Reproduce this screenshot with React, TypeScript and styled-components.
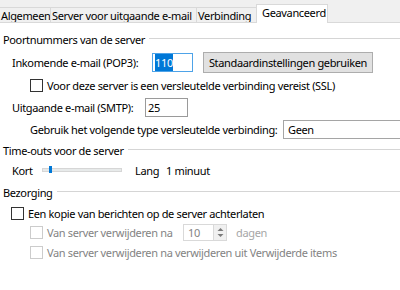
import React from 'react';
import styled, { createGlobalStyle } from 'styled-components';

const GlobalStyle = createGlobalStyle`
    html, body {
        margin: 0;
        padding: 0;
        background: #ffffff;
    }
    body {
        width: 400px;
        height: 290px;
        overflow: hidden;
        font-family: 'Noto Sans', 'Open Sans', sans-serif;
        font-size: 11px;
        letter-spacing: -0.35px;
        color: #000000;
    }
`;

const tabs = [
    { label: 'Algemeen', width: 51 },
    { label: 'Server voor uitgaande e-mail', width: 146 },
    { label: 'Verbinding', width: 60 },
    { label: 'Geavanceerd', width: 72, active: true },
];

const App = () => {
    return (
        <>
            <GlobalStyle />
            <Window>
                <TabBar>
                    {tabs.map((tab, index) => (
                        <Tab key={index} $width={tab.width} $active={!!tab.active}>
                            {tab.label}
                        </Tab>
                    ))}
                    <TabFill />
                </TabBar>
                <Content>
                    <GroupHeader $mt={8}>Poortnummers van de server</GroupHeader>
                    <Row $mt={4} $h={22} $indent={12}>
                        <Label $w={140}>Inkomende e-mail (POP3):</Label>
                        <TextBox $width={41} $focused>
                            <Selected>110</Selected>
                        </TextBox>
                        <Button>Standaardinstellingen gebruiken</Button>
                    </Row>
                    <Row $mt={4} $h={16} $indent={30}>
                        <CheckBox />
                        <Label>Voor deze server is een versleutelde verbinding vereist (SSL)</Label>
                    </Row>
                    <Row $mt={4} $h={20} $indent={12}>
                        <Label $w={133}>Uitgaande e-mail (SMTP):</Label>
                        <TextBox $width={43}>25</TextBox>
                    </Row>
                    <Row $mt={2} $h={20} $indent={30}>
                        <Label $w={253}>Gebruik het volgende type versleutelde verbinding:</Label>
                        <SelectBox>Geen</SelectBox>
                    </Row>
                    <GroupHeader $mt={3}>Time-outs voor de server</GroupHeader>
                    <Row $mt={4} $h={16} $indent={12}>
                        <Label $w={30}>Kort</Label>
                        <Track>
                            <Thumb style={{ left: 6 }} />
                        </Track>
                        <Label $w={31}>Lang</Label>
                        <Label>1 minuut</Label>
                    </Row>
                    <GroupHeader $mt={6}>Bezorging</GroupHeader>
                    <Row $mt={5} $h={16} $indent={11}>
                        <CheckBox />
                        <Label>Een kopie van berichten op de server achterlaten</Label>
                    </Row>
                    <Row $mt={1} $h={20} $indent={30} $disabled>
                        <CheckBox $disabled />
                        <Label $w={136}>Van server verwijderen na</Label>
                        <SpinBox>
                            <SpinValue>10</SpinValue>
                            <SpinButtons>
                                <svg width="7" height="11" viewBox="0 0 7 11">
                                    <path d="M3.5 1 L6.5 4 L0.5 4 Z" fill="#7a7a7a" />
                                    <path d="M3.5 10 L6.5 7 L0.5 7 Z" fill="#7a7a7a" />
                                </svg>
                            </SpinButtons>
                        </SpinBox>
                        <Days>dagen</Days>
                    </Row>
                    <Row $mt={2} $h={16} $indent={30} $disabled>
                        <CheckBox $disabled />
                        <Label>Van server verwijderen na verwijderen uit Verwijderde items</Label>
                    </Row>
                </Content>
            </Window>
        </>
    );
};

export default App;

const Window = styled.div`
    width: 400px;
    height: 290px;
    display: flex;
    flex-direction: column;
    background: #ffffff;
`;

const TabBar = styled.div`
    display: flex;
    align-items: flex-end;
    height: 23px;
    background: #f0f0f0;
`;

const Tab = styled.div<{ $width: number; $active: boolean }>`
    box-sizing: border-box;
    flex: none;
    width: ${(p) => p.$width}px;
    height: ${(p) => (p.$active ? 19 : 16)}px;
    padding-left: ${(p) => (p.$active ? 5 : 1)}px;
    padding-bottom: ${(p) => (p.$active ? 3 : 0)}px;
    display: flex;
    align-items: center;
    white-space: nowrap;
    overflow: hidden;
    background: ${(p) => (p.$active ? '#ffffff' : '#f0f0f0')};
    border: 1px solid #d9d9d9;
    border-left: ${(p) => (p.$active ? '1px solid #d9d9d9' : 'none')};
    border-bottom: ${(p) => (p.$active ? 'none' : '1px solid #d9d9d9')};
    margin-left: ${(p) => (p.$active ? -1 : 0)}px;
`;

const TabFill = styled.div`
    flex: 1;
    height: 1px;
    background: #d9d9d9;
`;

const Content = styled.div`
    display: flex;
    flex-direction: column;
`;

const GroupHeader = styled.div<{ $mt: number }>`
    display: flex;
    align-items: center;
    height: 16px;
    margin-top: ${(p) => p.$mt}px;
    padding-left: 3px;
    white-space: nowrap;
    &::after {
        content: '';
        flex: 1;
        height: 1px;
        margin-left: 4px;
        margin-top: -2px;
        background: #d5d5d5;
    }
`;

const Row = styled.div<{ $mt: number; $h: number; $indent: number; $disabled?: boolean }>`
    display: flex;
    align-items: center;
    height: ${(p) => p.$h}px;
    margin-top: ${(p) => p.$mt}px;
    padding-left: ${(p) => p.$indent}px;
    white-space: nowrap;
    color: ${(p) => (p.$disabled ? '#838383' : '#000000')};
`;

const Label = styled.span<{ $w?: number }>`
    flex: none;
    ${(p) => (p.$w ? `width: ${p.$w}px;` : '')}
`;

const TextBox = styled.div<{ $width: number; $focused?: boolean }>`
    box-sizing: border-box;
    width: ${(p) => p.$width}px;
    height: 19px;
    padding-left: 2px;
    display: flex;
    align-items: center;
    background: #ffffff;
    border: 1px solid ${(p) => (p.$focused ? '#4ea3e8' : '#9a9a9a')};
`;

const Selected = styled.span`
    background: #0078d7;
    color: #ffffff;
    padding: 1px 0;
    line-height: 15px;
`;

const Button = styled.div`
    box-sizing: border-box;
    width: 170px;
    height: 21px;
    margin-left: 10px;
    display: flex;
    align-items: center;
    justify-content: center;
    background: #e1e1e1;
    border: 1px solid #adadad;
`;

const CheckBox = styled.div<{ $disabled?: boolean }>`
    box-sizing: border-box;
    flex: none;
    width: 13px;
    height: 13px;
    margin-right: 4px;
    background: #ffffff;
    border: 1px solid ${(p) => (p.$disabled ? '#cccccc' : '#333333')};
`;

const SelectBox = styled.div`
    box-sizing: border-box;
    flex: 1;
    height: 19px;
    padding-left: 4px;
    display: flex;
    align-items: center;
    background: #ffffff;
    border: 1px solid #a5a5a5;
    border-right: none;
`;

const Track = styled.div`
    position: relative;
    box-sizing: border-box;
    flex: none;
    width: 80px;
    height: 4px;
    margin-right: 13px;
    background: #e7eaea;
    border: 1px solid #d6d6d6;
`;

const Thumb = styled.div`
    position: absolute;
    top: -3px;
    width: 3px;
    height: 7px;
    background: #0078d7;
`;

const SpinBox = styled.div`
    box-sizing: border-box;
    display: flex;
    align-items: center;
    width: 44px;
    height: 17px;
    background: #ffffff;
    border: 1px solid #d9d9d9;
`;

const SpinValue = styled.span`
    flex: 1;
    padding-left: 4px;
    color: #838383;
`;

const SpinButtons = styled.div`
    box-sizing: border-box;
    width: 13px;
    height: 15px;
    display: flex;
    align-items: center;
    justify-content: center;
    background: #f0f0f0;
    border-left: 1px solid #d9d9d9;
`;

const Days = styled.span`
    margin-left: 9px;
    color: #a6a6a6;
`;
